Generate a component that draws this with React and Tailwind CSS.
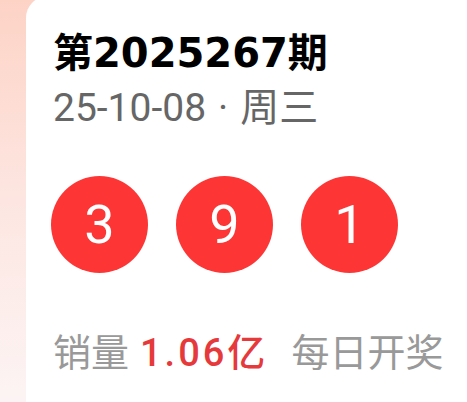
import React from "react";

const balls = [3, 9, 1];

function Ball({ n }) {
    return (
        <div className="w-[97px] h-[97px] rounded-full bg-[#fd3535] flex items-center justify-center text-white text-[54px] font-normal leading-none">
            {n}
        </div>
    );
}

export default function App() {
    return (
        <div
            className="w-[467px] h-[402px] overflow-hidden flex bg-gradient-to-b from-[#fdd3c6] via-[#fde6e1] to-[#fcf4f4]"
            style={{ fontFamily: 'Roboto, "Noto Sans CJK SC", sans-serif' }}
        >
            <div className="ml-[26px] -mt-[4px] flex-1 bg-white rounded-tl-[22px] pl-[27px] pt-[33px]">
                <div
                    className="text-[40px] leading-[48px] font-bold text-black"
                    style={{ fontFamily: '"DejaVu Sans", "Noto Sans CJK SC", sans-serif' }}
                >
                    第2025267期
                </div>
                <div className="mt-[9px] text-[39px] leading-[44px] text-[#666666] flex items-center">
                    <span>25-10-08</span>
                    <span className="mx-[12px]">·</span>
                    <span>周三</span>
                </div>
                <div className="mt-[46px] -ml-[2px] flex gap-[28px]">
                    {balls.map((n, i) => (
                        <Ball key={i} n={n} />
                    ))}
                </div>
                <div className="mt-[58px] text-[38px] leading-[44px] text-[#999999] flex items-center">
                    <span>销量</span>
                    <span className="ml-[11px] text-[#e6393c] font-medium tracking-[3px]">1.06亿</span>
                    <span className="ml-[23px]">每日开奖</span>
                </div>
            </div>
        </div>
    );
}
